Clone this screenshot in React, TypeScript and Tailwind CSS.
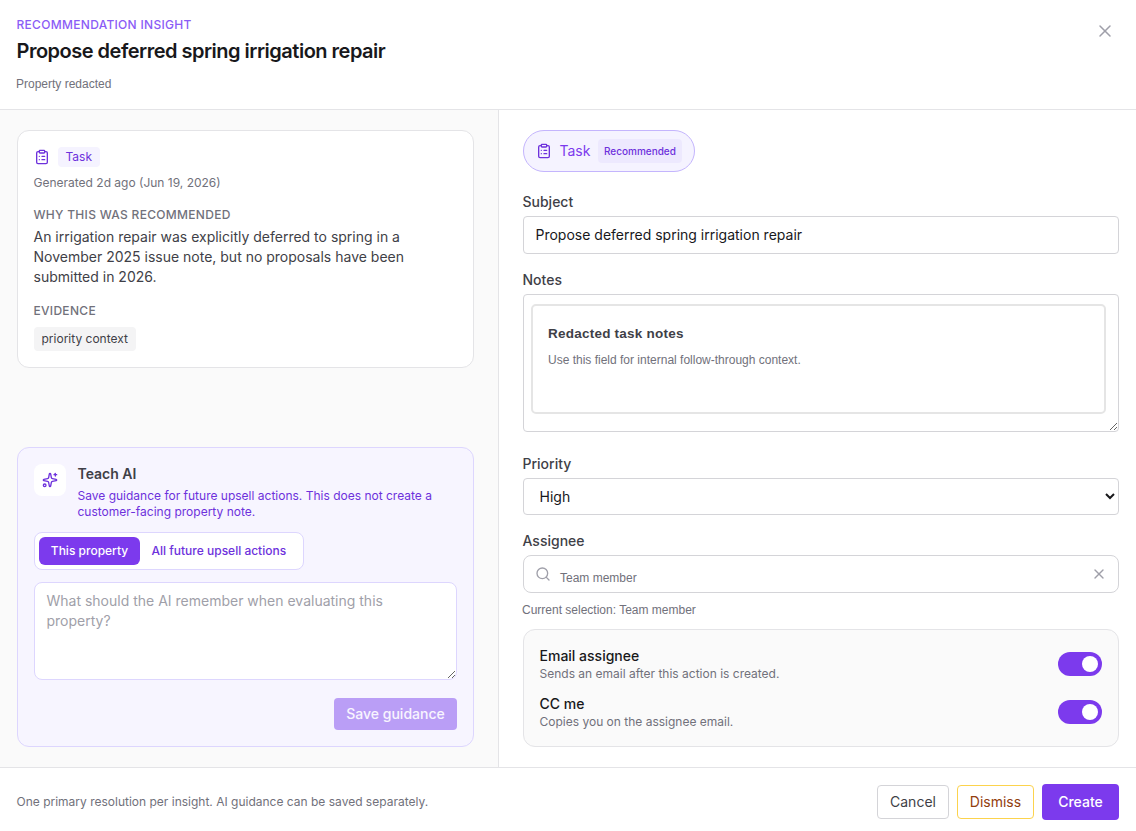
import React from "react";
import { ClipboardList, Search, Sparkles, X } from "lucide-react";

function Toggle({ label }: { label: string }) {
  return (
    <button
      role="switch"
      aria-checked="true"
      aria-label={label}
      className="flex h-6 w-11 items-center justify-end rounded-full bg-[#7c3aed] pr-1"
    >
      <span className="size-4 rounded-full bg-white" />
    </button>
  );
}

function ToggleRow({ title, hint }: { title: string; hint: string }) {
  return (
    <div className="flex items-center justify-between">
      <div className="-ml-[0.5px]">
        <p className="text-sm/5 font-medium text-zinc-900">{title}</p>
        <p className="text-xs/4 text-zinc-500">{hint}</p>
      </div>
      <Toggle label={title} />
    </div>
  );
}

function Label({ children }: { children: React.ReactNode }) {
  return <p className="mb-1 -ml-[0.5px] text-sm/5 font-medium text-zinc-700">{children}</p>;
}

function InsightPanel() {
  return (
    <aside className="flex w-[499px] shrink-0 flex-col justify-between border-r border-zinc-200 bg-[#fafafa] py-5 pr-6 pl-[17px]">
      <section className="rounded-xl border border-zinc-200 bg-white p-4">
        <div className="flex items-center gap-2">
          <ClipboardList className="size-4 text-[#6d31dc]" />
          <span className="h-5 w-[42px] rounded bg-[#f5f3ff] pl-[7.5px] text-xs/5 text-[#6d31dc]">Task</span>
        </div>
        <div className="-ml-[0.5px]">
          <p className="mt-2 text-xs/4 text-zinc-500">Generated 2d ago (Jun 19, 2026)</p>
          <h2 className="mt-4 text-xs/4 font-medium tracking-wide text-zinc-500">WHY THIS WAS RECOMMENDED</h2>
          <p className="mt-1 text-sm/5 text-zinc-700">
            An irrigation repair was explicitly deferred to spring in a
            <br />
            November 2025 issue note, but no proposals have been
            <br />
            submitted in 2026.
          </p>
          <h2 className="mt-4 text-xs/4 font-medium tracking-wide text-zinc-500">EVIDENCE</h2>
        </div>
        <div className="mt-2 flex">
          <span className="h-6 w-[102px] rounded bg-zinc-100 pl-[7.5px] text-xs/6 text-zinc-700">priority context</span>
        </div>
      </section>

      <section className="rounded-xl border border-[#ddd6fe] bg-[#f7f5ff] p-4">
        <div className="flex items-start gap-3">
          <span className="flex size-8 shrink-0 items-center justify-center rounded-lg bg-white">
            <Sparkles className="size-4 text-[#6d31dc]" />
          </span>
          <div className="-ml-[0.5px]">
            <h2 className="text-sm/5 font-semibold text-zinc-700">Teach AI</h2>
            <p className="mt-1 text-xs/4 whitespace-nowrap text-[#6d31dc]">
              Save guidance for future upsell actions. This does not create a
              <br />
              customer-facing property note.
            </p>
          </div>
        </div>
        <div className="mt-3 flex h-[38px] w-[270px] rounded-lg border border-[#ddd6fe] bg-white p-1 text-xs/7 font-medium whitespace-nowrap">
          <button className="h-7 w-[101px] rounded-md bg-[#7c3aed] text-white">This property</button>
          <button className="h-7 px-[11.5px] text-[#6d31dc]">All future upsell actions</button>
        </div>
        <textarea
          className="mt-3 block h-[98px] w-full resize-y rounded-lg border border-[#ddd6fe] bg-white px-[11.5px] py-2 text-sm/5 placeholder:text-zinc-400"
          placeholder="What should the AI remember when evaluating this property?"
        />
        <div className="mt-[18px] flex justify-end">
          <button className="h-8 w-[123px] rounded bg-[#ba9ef6] text-sm font-medium text-white/90">Save guidance</button>
        </div>
      </section>
    </aside>
  );
}

function ActionForm() {
  return (
    <main className="min-w-0 flex-1 bg-white pt-5 pr-[17px] pl-6">
      <div className="flex">
        <button className="flex h-[42px] w-[172px] items-center gap-2 rounded-full border border-[#c4b5fd] bg-[#f5f3ff] px-3 text-[#6d31dc]">
          <ClipboardList className="size-4 shrink-0" />
          <span className="-ml-[0.5px] w-[30px] text-sm text-[#7c3aed]">Task</span>
          <span className="h-6 w-[84px] shrink-0 rounded bg-[#ede9fe] pl-[6.5px] text-left text-[10px]/6 font-medium">Recommended</span>
        </button>
      </div>

      <div className="mt-5">
        <Label>Subject</Label>
        <input
          className="block h-[38px] w-full rounded border border-zinc-300 px-[11.5px] pb-0.5 text-sm text-zinc-900"
          defaultValue="Propose deferred spring irrigation repair"
        />
      </div>

      <div className="mt-4">
        <Label>Notes</Label>
        <div className="h-[138px] resize-y overflow-hidden rounded border border-zinc-300 pt-[9px] pr-[12.5px] pl-[7px] font-['Liberation_Sans',sans-serif]">
          <div className="h-[110px] rounded-[5px] border-2 border-[#e5e5e5] px-[15px] pt-[18px]">
            <p className="text-[13.5px]/5 font-bold tracking-[0.017em] text-zinc-700">Redacted task notes</p>
            <p className="mt-2 text-xs/4 text-zinc-500">Use this field for internal follow-through context.</p>
          </div>
        </div>
      </div>

      <div className="mt-[22px]">
        <Label>Priority</Label>
        <select
          className="block h-[37px] w-full rounded border border-zinc-300 bg-white pl-[11.5px] text-sm text-zinc-900"
          defaultValue="High"
        >
          <option>High</option>
          <option>Medium</option>
          <option>Low</option>
        </select>
      </div>

      <div className="mt-4">
        <Label>Assignee</Label>
        <div className="flex h-[38px] items-center rounded-lg border border-zinc-300 pr-[11px] pl-[11px]">
          <Search className="size-4 text-zinc-400" />
          <span className="mt-2 ml-[9px] flex-1 font-['Liberation_Sans',sans-serif] text-xs/4 text-zinc-500">Team member</span>
          <X className="size-4 text-zinc-400" />
        </div>
        <p className="mt-[9px] -ml-px font-['Liberation_Sans',sans-serif] text-xs/4 text-zinc-500">Current selection: Team member</p>
      </div>

      <div className="mt-[11px] flex flex-col gap-3 rounded-xl border border-zinc-200 bg-[#fafafa] p-4">
        <ToggleRow title="Email assignee" hint="Sends an email after this action is created." />
        <ToggleRow title="CC me" hint="Copies you on the assignee email." />
      </div>
    </main>
  );
}

export default function App() {
  return (
    <div className="flex h-[831px] w-[1136px] flex-col overflow-hidden bg-white font-['Inter',sans-serif]">
      <header className="flex h-[110px] shrink-0 items-start justify-between border-b border-zinc-200 pr-[21px] pl-[16.5px]">
        <div>
          <p className="mt-[17px] text-xs/4 font-medium tracking-wide text-[#8b5cf6]">RECOMMENDATION INSIGHT</p>
          <h1 className="mt-1 text-xl/7 font-semibold tracking-tight text-zinc-900">Propose deferred spring irrigation repair</h1>
          <p className="mt-[11px] -ml-[0.5px] font-['Liberation_Sans',sans-serif] text-xs/4 text-zinc-500">Property redacted</p>
        </div>
        <button aria-label="Close" className="mt-[21px]">
          <X className="size-5 text-zinc-400" strokeWidth={1.8} />
        </button>
      </header>

      <div className="flex h-[657px] shrink-0">
        <InsightPanel />
        <ActionForm />
      </div>

      <footer className="flex h-[69px] shrink-0 items-center justify-between border-t border-zinc-200 pr-[17px] pl-[16.5px]">
        <p className="text-xs/4 text-zinc-500">One primary resolution per insight. AI guidance can be saved separately.</p>
        <div className="flex items-center gap-2 text-sm">
          <button className="h-[34px] w-[72px] rounded border border-zinc-300 text-zinc-700">Cancel</button>
          <button className="h-[34px] w-[77px] rounded border border-[#fcd34d] text-[#92400e]">Dismiss</button>
          <button className="h-9 w-[77px] rounded bg-[#7c3aed] font-medium text-white">Create</button>
        </div>
      </footer>
    </div>
  );
}
